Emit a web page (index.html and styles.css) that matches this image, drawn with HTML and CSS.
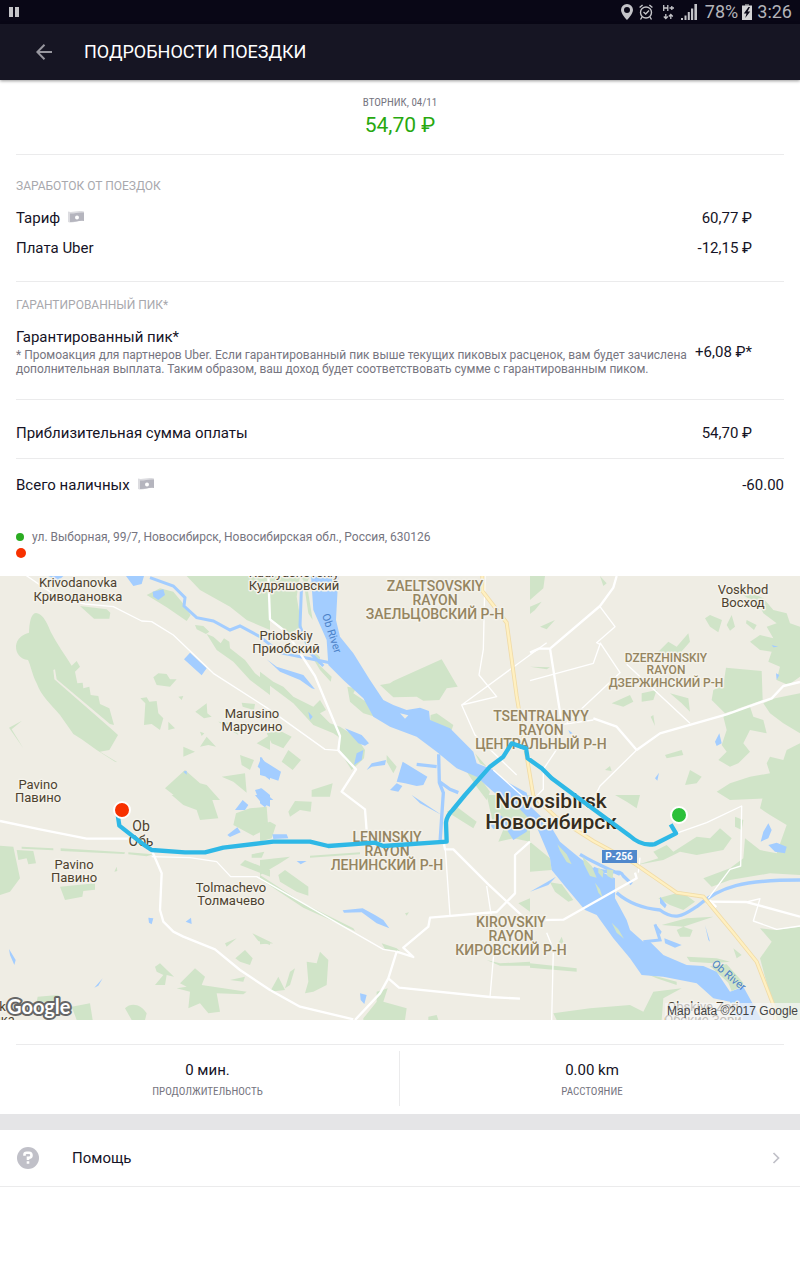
FILE: index.html
```
<!DOCTYPE html>
<html lang="ru">
<head>
    <meta charset="UTF-8">
    <meta name="viewport" content="width=device-width, initial-scale=1.0">
    <title>Подробности поездки</title>
    <link rel="stylesheet" href="styles.css">
</head>
<body>
    <svg class="sprite" aria-hidden="true">
        <symbol id="cash" viewBox="0 0 16 12">
            <path d="M0 0.5C4 2 9-1 16 0.5V10C10 9 5 13 0 11Z" fill="#dcdce0"/>
            <path d="M2 2.5C6 3 10 1 16 1.5V10C11 9 7 11.500 2 11Z" fill="#b5b5be"/>
            <circle cx="9" cy="6.500" r="2" fill="#fff"/>
        </symbol>
    </svg>

    <div class="status-bar">
        <svg width="12" height="12" viewBox="0 0 12 12"><path d="M1 1h4v10H1zM7 1h4v10H7z" fill="#c4c4c8"/></svg>
        <div class="status-icons">
            <svg width="12" height="16" viewBox="0 0 12 16"><path fill-rule="evenodd" d="M6 0a6 6 0 0 0-6 6c0 4 6 10 6 10s6-6 6-10a6 6 0 0 0-6-6zm0 3a3 3 0 1 1 0 6 3 3 0 0 1 0-6z" fill="#c4c4c8"/></svg>
            <svg class="alarm" width="14" height="16" viewBox="0 0 14 16" fill="none" stroke="#c4c4c8" stroke-width="1.400"><circle cx="7" cy="8.500" r="5.500"/><path d="M4.500 8l2.200 2L10 6.500M.6 3.500L3.600 1M13.400 3.500L10.400 1M3 13l-1.500 2.500M11 13l1.500 2.500"/></svg>
            <svg class="data" width="11" height="16" viewBox="0 0 11 16" fill="none" stroke="#c4c4c8" stroke-width="1.300"><path d="M.7 1v6M4.800 1v6M.7 4h4M6.500 4H11M8.800 2v4M2.800 10v4.500M.8 12.500l2 2 2-2M7.800 15v-4.500M5.800 12.500l2-2 2 2"/></svg>
            <svg width="16" height="16" viewBox="0 0 16 16"><path d="M0 14h2v2H0zM3.500 11.500h2V16h-2zM6.800 8h2v8h-2zM10 4.500h2.200V16H10zM13.400 0H16v16h-2.600z" fill="#c4c4c8"/></svg>
            <span class="battery-level">78%</span>
            <svg class="battery" width="10" height="16" viewBox="0 0 10 16"><path d="M3 0h4v2H3z" fill="#77777c"/><path d="M0 1.500h10V16H0z" fill="#d4d4d6"/><path d="M6.500 3L1.800 9.500h2.700L3.200 14 8.200 7.500H5.600L8 3z" fill="#0a0818"/></svg>
            <span class="clock">3:26</span>
        </div>
    </div>

    <header class="toolbar">
        <button class="back" type="button" aria-label="Назад">
            <svg width="16" height="16" viewBox="0 0 16 16" fill="none" stroke="#98979f" stroke-width="2"><path d="M16 8H1.500M8.500 .8L1.300 8l7.200 7.200"/></svg>
        </button>
        <h1>ПОДРОБНОСТИ ПОЕЗДКИ</h1>
    </header>

    <main>
        <section class="summary">
            <div class="caption">ВТОРНИК, 04/11</div>
            <div class="total">54,70 ₽</div>
        </section>

        <section class="block">
            <h2>ЗАРАБОТОК ОТ ПОЕЗДОК</h2>
            <div class="row">
                <span class="label">Тариф <svg class="cash" width="16" height="12"><use href="#cash"/></svg></span>
                <span>60,77 ₽</span>
            </div>
            <div class="row">
                <span class="label">Плата Uber</span>
                <span>-12,15 ₽</span>
            </div>
        </section>

        <section class="block promo">
            <h2>ГАРАНТИРОВАННЫЙ ПИК*</h2>
            <div class="row promo-row">
                <div class="promo-text">
                    <h3>Гарантированный пик*</h3>
                    <p>* Промоакция для партнеров Uber. Если гарантированный пик выше текущих пиковых расценок, вам будет зачислена дополнительная выплата. Таким образом, ваш доход будет соответствовать сумме с гарантированным пиком.</p>
                </div>
                <span>+6,08 ₽*</span>
            </div>
        </section>

        <section class="block payout">
            <div class="row">
                <span class="label">Приблизительная сумма оплаты</span>
                <span>54,70 ₽</span>
            </div>
        </section>

        <section class="block cash-total">
            <div class="row">
                <span class="label">Всего наличных <svg class="cash" width="16" height="12"><use href="#cash"/></svg></span>
                <span>-60.00</span>
            </div>
        </section>

        <ul class="stops">
            <li><i class="dot start"></i>ул. Выборная, 99/7, Новосибирск, Новосибирская обл., Россия, 630126</li>
            <li><i class="dot end"></i></li>
        </ul>

        <div class="map">
            <svg viewBox="0 0 800 444" role="img" aria-label="Маршрут поездки">
                <rect width="800" height="444" fill="#efede4"/>
                <!-- terrain is drawn at triple scale -->
                <g transform="scale(.333334)">
                    <g class="parks">
                        <g transform="translate(0 -18)">
                            <path d="M108 129C125 130 138 150 152 185C170 220 195 255 215 287L230 273L240 290L225 305L232 340L248 338L250 355L268 350L272 375L295 378L300 402L328 415L342 465L330 462L170 328L165 298L160 300L163 328L335 478L354 495L328 540L300 545L352 577L345 575L290 540L245 508L220 492L180 435C150 400 125 380 110 340C95 310 92 285 84 270C60 268 47 248 48 228C50 205 68 193 87 188C88 160 92 130 108 129Z"/>
                            <path d="M240 108L320 118L331 128L328 146L282 146ZM440 75L480 55L520 65L545 95L572 135L560 153L500 112ZM560 18L600 60L690 110L740 150L810 180V18ZM585 165L610 168L628 185L618 192L590 178ZM620 192L640 200L662 220L672 205L688 215L690 235L735 270L765 310L810 345V375L750 330L700 275L650 240ZM460 322L475 310L500 312L510 328L530 328L510 350L470 345ZM421 385L440 382L448 395L470 393L475 430L490 445L480 480L455 462L432 465L436 400ZM505 455L525 475L505 480ZM586 425L620 400L622 430L635 440L612 445ZM535 380L550 378L545 390ZM725 398L765 402L762 420L728 410ZM550 530L585 545L550 560ZM600 530L620 500L648 530L625 525ZM655 455L700 460L715 495L690 480ZM720 555L762 570L750 600L725 585ZM495 655L555 600L600 640L620 645L660 690H540ZM665 620L735 610L740 668L700 635ZM600 485L613 490L605 498ZM770 520L810 495V540ZM27 473L66 452L35 478L70 535Z"/>
                        </g>
                        <g transform="translate(780 -18)">
                            <path d="M0 18H120L110 80L125 170L90 190L50 160L0 130ZM115 18H150L140 40L158 150L145 130L130 30ZM150 230L180 262L178 285L215 320L212 335L180 300L150 250ZM0 305L40 335L70 350L100 380L160 410L180 390L198 420L180 430L210 460L240 470L288 500L315 540L312 565L275 600L240 545L235 500L220 490L160 465L100 400L0 325ZM360 345L390 340L400 333L545 268L593 350L560 355L538 390L490 392L470 380L400 382ZM262 350L288 355L280 370L325 400L345 440L310 430L270 395ZM512 435L530 430L580 465L575 480L510 455ZM20 490L60 482L95 500L70 535L35 520ZM85 540L123 570L98 600L65 575ZM155 660L218 640L210 680L155 680ZM380 555L410 590L400 610L380 575ZM620 605L650 610L690 665L680 690L650 650ZM645 550L680 590L660 580Z"/>
                        </g>
                        <g transform="translate(1590 -18)">
                            <path d="M0 18H45L40 55L0 90ZM0 110L35 95L15 120L0 132ZM525 145L540 135L576 150L565 187L540 170ZM590 165L605 135L615 170L600 182ZM615 55L670 70L700 85L730 120L770 130L780 160L810 170V320L775 345L740 330L750 290L715 275L725 245L690 240L660 215L690 195L730 205L710 170L740 160L700 130L690 110L640 75ZM588 293L695 303L698 390L585 430L545 390L550 360L580 345ZM610 420L660 410L670 440L700 450L710 490L660 480L640 520L660 545L625 580L600 590L565 570L590 545L575 525L590 480L580 440ZM700 400L735 385L810 370V490L760 460L720 430ZM710 580L720 560L760 570L770 540L810 520V680L600 690L560 665L600 640L660 620L720 610ZM405 555L455 540L460 555L410 565ZM480 600L515 620L500 640L465 645ZM245 400L300 375L310 395L280 410ZM335 370L380 360L370 390L335 395ZM420 370L475 385L480 425L455 400ZM385 245L415 215L440 230L475 190L480 215L450 250L400 260ZM225 600L240 588L245 603ZM210 18L230 40L220 48ZM0 290L60 292L50 298ZM30 170L75 150L50 178ZM370 435L375 468L362 440ZM650 150L680 165L672 180L648 160Z"/>
                        </g>
                        <g transform="translate(0 657)">
                            <path d="M0 152L40 155L60 250L30 290L0 300ZM50 165L100 168L108 205L85 208L80 190L55 195ZM65 155L160 160L160 166L65 161ZM182 160L375 172L373 177L182 168ZM385 172L460 178L440 184L385 178ZM180 275L285 265V284L250 288L247 305L195 315ZM515 0H632L655 70L600 75L590 45L550 30ZM708 55L750 40L800 35L805 100L760 122L700 90ZM755 178L793 170L785 188L755 188ZM735 195L810 225V245L720 210ZM465 515L480 505L522 545L500 540L495 570L465 570L490 540L470 530ZM530 580L560 575L540 565L585 520L615 545L605 570L640 575L740 590L730 598L650 595L660 650L625 655L600 625L565 640L570 590ZM706 490L735 465L758 490L750 510L720 500ZM757 415L810 440L810 450L775 438ZM690 555L735 545L730 560ZM215 635L270 625L278 675H230ZM375 640C395 620 425 630 440 655L435 675H395ZM113 605L175 600L180 625L110 620ZM675 445L710 430L680 455ZM343 230L350 215L352 228Z"/>
                        </g>
                        <g transform="translate(780 657)">
                            <path d="M0 90L30 80L48 90L35 130L0 140ZM85 50L105 18L155 20L152 50L120 45L90 65ZM55 240L75 225L145 275L145 302L110 290L60 260ZM0 195L90 185L60 205L0 240ZM150 182L300 172L300 178L150 188ZM0 240L130 325L280 400L285 408L130 338L0 252ZM0 430L40 445L0 448ZM30 590L55 545L75 585ZM105 520L90 570L75 580L90 530ZM140 500L170 505L180 470L205 495L200 570L160 590L135 595L145 560ZM365 445L410 460L420 468L375 462ZM560 50L590 35L650 80L640 100L585 65ZM680 0L700 90L740 80L715 140L760 130L810 140V0ZM775 325L810 310V350ZM680 495L720 505L810 500V512L720 512ZM310 670L350 620L350 590L383 580L370 620L440 640L435 675H310ZM505 665L530 660L535 675H505ZM435 355L447 352L440 362Z"/>
                        </g>
                        <g transform="translate(1590 657)">
                            <path d="M0 140L60 190L65 225L0 230ZM60 262L95 268L130 315L115 320L75 290ZM320 210L385 190L370 170L410 150L430 170L500 125L540 130L570 100L605 130L580 165L500 180L450 170L400 195ZM615 65L640 75L635 105L615 95ZM520 250L600 220L640 190L645 130L690 165L740 175L770 90L720 60L690 40L700 0H810V240L720 235L600 255L545 275ZM385 310L455 290L495 320L460 345L420 330ZM395 390L470 370L550 365L460 395ZM690 400L735 405L810 395V675H740L720 600L690 490L725 440ZM440 405L460 395L488 405L480 425L450 425ZM345 535L440 560L440 570L380 550ZM70 655L180 640L300 630L340 650L370 590L455 580L400 610L395 675H80ZM470 485L560 490L600 500L550 505L480 500ZM0 505L140 520L140 530L0 518ZM95 425L100 440L75 465ZM255 0H330L320 40L290 20ZM610 460L635 480L620 490Z"/>
                        </g>
                    </g>
                    <g class="water">
                        <path d="M933 0L940 102L980 192L985 267L1030 312L1090 367L1120 422L1170 452L1250 482L1310 527L1370 577L1430 602L1480 647L1560 700L1610 752L1650 847L1655 882L1700 937L1755 1002L1790 1017L1840 1087L1890 1147L1925 1197L1990 1202L2090 1222L2140 1267L2190 1277L2210 1332H2285L2230 1232L2190 1247L2150 1187L2110 1170L2060 1167L1990 1137L1950 1097L1930 1097L1890 1062L1880 1032L1845 967V907L1780 877L1740 847L1680 797L1650 747L1590 690L1580 650L1520 617L1480 582L1430 562L1420 527L1350 457L1290 432L1287 405L1260 395L1220 402L1180 387L1150 372L1110 312L1060 232L1020 182L1008 132L1015 0Z"/>
                        <path d="M1780 877C1830 900 1860 875 1870 900L1895 924M1740 835C1790 865 1830 880 1860 895M1320 800L1330 650L1318 620L1316 535M1320 618L1350 640L1375 650M1250 565L1310 572" fill="none" stroke="#a3cdff" stroke-width="10"/>
                        <path d="M1850 950C1890 985 1940 998 1980 1002C2030 1040 2060 1010 2090 992C2160 930 2230 912 2400 912" fill="none" stroke="#a3cdff" stroke-width="10"/>
                        <path d="M1930 1097L1980 1092L1965 1045M450 5L520 30L555 65L552 90L590 125L640 135L690 162L720 150L780 182L840 230L990 260M905 20L900 150L930 230L970 270" fill="none" stroke="#a3cdff" stroke-width="9"/>
                        <g transform="translate(0 -18)">
                            <path d="M378 18H432L425 42L400 48ZM458 65L490 58L495 75L475 90L460 80ZM552 268L570 248L620 295L605 316ZM145 18H190L175 32ZM550 605L560 602V614ZM785 560L798 590L790 605L773 590ZM800 600L810 600V630L797 620ZM765 660L785 655L810 675V700L775 685Z"/>
                        </g>
                        <g transform="translate(780 -18)">
                            <path d="M255 475L305 495L327 520L315 527L295 520ZM290 550L310 540L305 570L282 585ZM320 600L335 580L378 570L375 585L335 590ZM0 560L15 575L63 605L55 632L20 620L0 615ZM410 635L428 575L502 620L490 645L470 648L435 640ZM390 660L410 640L427 648L415 665ZM0 655L40 690H0ZM145 425L158 440L150 450ZM20 268L50 290L130 315L165 358L155 355L120 330L60 305Z"/>
                        </g>
                        <g transform="translate(1590 -18)">
                            <path d="M555 515L568 490L575 520L560 528ZM375 625L387 608L382 632ZM115 480L128 490L120 492ZM725 225L745 230L730 232ZM738 310L748 315L740 330Z"/>
                        </g>
                        <g transform="translate(0 657)">
                            <path d="M765 0H810V35L785 25ZM705 45L728 15L745 30L735 45ZM682 120L712 97L722 112L690 126ZM445 368L460 370L455 388L447 383ZM557 380L573 368L575 387ZM27 462L47 495L43 510L30 480ZM283 578L308 550L295 572Z"/>
                        </g>
                        <g transform="translate(780 657)">
                            <path d="M0 5L30 15L15 37L0 25ZM37 118L80 118L85 130L40 132ZM248 346L308 340L345 360L370 375L388 400L350 385L305 352L252 353ZM300 595L320 600L313 627L302 615ZM110 198L140 198L122 208ZM455 0L545 60L480 25ZM690 90L720 60L750 80L805 75L800 110L760 135L735 95L700 102Z"/>
                        </g>
                        <g transform="translate(1590 657)">
                            <path d="M692 140L700 110L715 85L725 105L715 130ZM715 150L740 143L770 155L765 175L735 170ZM390 305L410 330L405 340L390 325ZM375 385L395 410L390 420ZM403 430L455 450L435 458L405 445ZM525 390L540 440L535 435ZM0 290L50 262L78 245L55 270Z"/>
                        </g>
                        <!-- islands -->
                        <path d="M1672 805L1700 835L1715 865L1700 858L1680 825ZM1748 842L1775 870L1790 905L1770 900L1752 865ZM1795 875L1810 885L1808 905L1795 890ZM1820 880L1840 883L1838 908L1822 900ZM1785 920L1800 940L1808 965L1795 950ZM1835 1040L1855 1060L1872 1088L1850 1070ZM2130 1170L2180 1165L2230 1220L2225 1232L2195 1245L2185 1220Z" fill="#d0e4c8"/>
                        <path d="M1200 412L1225 418L1215 428Z" fill="#efede4"/>
                    </g>
                    <g class="roads">
                        <path d="M0 735L120 760L260 788L400 788M455 822L485 892L480 1002L490 1037L520 1067L550 1082L645 1120L720 1182L810 1242L900 1292L1060 1330M1190 1127L1240 1143L1210 1115L1285 1052L1290 1025L1490 1008L1545 952L1545 837L1590 797M1190 1127L1165 1207L1140 1252L1065 1332M1165 1207L1197 1235L1470 1263L1560 1268M1332 805L1335 820H1360L1465 925L1580 1032"/>
                        <path d="M1560 1034L1690 1031L1910 907L1905 890M1015 523L1068 580L1025 647L1095 700L1102 790M1015 523L1020 480L945 300L860 170L810 130L805 0"/>
                        <path d="M1590 230L1617 218H1650L1800 90L1840 35L1850 0M1650 217L1685 440L1670 520M1910 522L1980 472L2180 415L2315 367L2350 330L2400 318M1780 427L1850 452L1910 522"/>
                    </g>
                    <g class="roads streets">
                        <path d="M455 842L570 845L650 857L692 902L770 902L1150 1120L1190 1127M75 -4L180 68L255 84L340 92L425 135L455 137L520 177L640 292L800 395L975 520L1015 523"/>
                        <path d="M1455 0L1450 220L1437 297L1490 362L1385 387L1425 477L1550 597M1385 387L1640 200M1670 520L1630 580V640L1590 680M1590 314L1780 262L1800 205L1790 200L1845 152L1800 92M1800 200L1860 290L1700 440M1880 265L2070 442M1640 452L1780 432M1910 522L1800 630L1770 690"/>
                        <path d="M2028 772L2120 740L2225 690L2222 870L2190 880L2125 967M2240 978L2280 968L2260 1035L2330 1060L2400 1050M1460 930L1485 1090L1470 1263M1336 820L1350 1018M1640 1070L1660 1120L1655 1332M1920 845L1915 890M1480 582L1590 680"/>
                    </g>
                    <path class="roads" d="M2125 977L2240 978L2400 1022"/>
                    <path d="M2125 977L2145 997" stroke="#fff" stroke-width="18"/>
                    <path class="highway-edge" d="M1447 0V45L1520 140L1550 360L1570 480L1600 660L1670 725L1780 795L1900 860L2030 950L2110 962L2200 1070L2270 1157L2325 1300V1332"/>
                    <path class="highway" d="M1447 0V45L1520 140L1550 360L1570 480L1600 660L1670 725L1780 795L1900 860L2030 950L2110 962L2200 1070L2270 1157L2325 1300V1332"/>
                </g>
                <g class="places">
                    <text x="78" y="11">Krivodanovka</text><text x="78" y="25">Криводановка</text>
                    <text x="294" y="1">Kudryashovskiy</text><text x="294" y="14">Кудряшовский</text>
                    <text x="286" y="64">Priobskiy</text><text x="286" y="77">Приобский</text>
                    <text x="252" y="142">Marusino</text><text x="252" y="155">Марусино</text>
                    <text x="38" y="213">Pavino</text><text x="38" y="226">Павино</text>
                    <text x="74" y="293">Pavino</text><text x="74" y="306">Павино</text>
                    <text x="231" y="316">Tolmachevo</text><text x="231" y="329">Толмачево</text>
                    <text x="743" y="18">Voskhod</text><text x="743" y="31">Восход</text>
                    <text x="703" y="435">Obskiye Zori</text><text x="703" y="448">Обские Зори</text>
                    <text x="6" y="435">ka</text><text x="4" y="448">ика</text>
                </g>
                <g class="places town"><text x="141" y="255">Ob</text><text x="141" y="270">Обь</text></g>
                <g class="districts">
                    <text x="435" y="15">ZAELTSOVSKIY</text><text x="435" y="29">RAYON</text><text x="435" y="43">ЗАЕЛЬЦОВСКИЙ Р-Н</text>
                    <text x="541" y="145">TSENTRALNYY</text><text x="541" y="159">RAYON</text><text x="541" y="173">ЦЕНТРАЛЬНЫЙ Р-Н</text>
                    <text x="387" y="266">LENINSKIY</text><text x="387" y="280">RAYON</text><text x="387" y="294">ЛЕНИНСКИЙ Р-Н</text>
                    <text x="511" y="351">KIROVSKIY</text><text x="511" y="365">RAYON</text><text x="511" y="379">КИРОВСКИЙ Р-Н</text>
                </g>
                <g class="districts small"><text x="666" y="86">DZERZHINSKIY</text><text x="666" y="98">RAYON</text><text x="666" y="111">ДЗЕРЖИНСКИЙ Р-Н</text></g>
                <g class="city"><text x="551" y="232">Novosibirsk</text><text x="551" y="253">Новосибирск</text></g>
                <g class="rivers">
                    <text transform="translate(322 39) rotate(72)">Ob River</text>
                    <text transform="translate(711 389) rotate(40)">Ob River</text>
                </g>
                <rect x="602" y="274" width="35" height="13" fill="#5088cc"/>
                <text class="shield" x="619" y="284">P-256</text>
                <g transform="scale(.333334)">
                    <path class="route" d="M353 715L358 749L400 782L430 805L455 822L555 829L615 829L670 815L820 797H930L985 810L1125 800L1150 810L1340 797L1338 740Q1340 720 1358 702L1395 657L1470 572L1510 542L1535 502L1578 517L1583 547L1625 577L1655 607L1740 670L1890 780Q1925 812 1965 804L2028 772L2012 745"/>
                </g>
                <circle class="pin" cx="122" cy="234" r="8" fill="#f73100"/>
                <circle class="pin" cx="679" cy="239" r="8" fill="#2bc03a"/>
                <text class="google" x="7" y="438">Google</text>
            </svg>
            <small class="attribution">Map data ©2017 Google</small>
        </div>

        <section class="stats">
            <div class="stat"><div class="value">0 мин.</div><div class="caption">ПРОДОЛЖИТЕЛЬНОСТЬ</div></div>
            <div class="stat"><div class="value">0.00 km</div><div class="caption">РАССТОЯНИЕ</div></div>
        </section>

        <a class="help" href="#">
            <svg width="24" height="24" viewBox="0 0 24 24"><circle cx="12" cy="12" r="11" fill="#c0c0c8"/><path d="M8.500 9.800V8.500Q8.500 6.800 10.500 6.800H13Q15.500 6.800 15.500 9.300T13 11.800H12V14" fill="none" stroke="#fff" stroke-width="2.600"/><path d="M10.700 15.300h2.600v2.500h-2.600z" fill="#fff"/></svg>
            <span>Помощь</span>
            <svg class="chevron" width="8" height="12" viewBox="0 0 8 12" fill="none" stroke="#c0c0c8" stroke-width="1.700"><path d="M1.500 1L6.500 6l-5 5"/></svg>
        </a>
    </main>
</body>
</html>
```

FILE: styles.css
```
* { box-sizing: border-box; }
body { margin: 0; background: #fff; color: #151326; font-family: Roboto, "Liberation Sans", sans-serif; font-size: 15px; line-height: 20px; }
h1, h2, h3, p, ul { margin: 0; padding: 0; font-weight: 400; }
svg { display: block; flex: none; }
.sprite { position: absolute; width: 0; height: 0; }

.status-bar { display: flex; align-items: center; justify-content: space-between; height: 24px; padding: 0 8px; background: #090716; color: #b4b4b9; font-size: 18px; }
.status-icons { display: flex; align-items: center; }
.alarm { margin-left: 6px; }
.data { margin: 0 7px 0 10px; }
.battery-level { margin-left: 8px; }
.battery { margin: 0 5px 0 4px; }

.toolbar { display: flex; align-items: center; height: 56px; padding: 0 24px; background: #161523; color: #fff; box-shadow: 0 1px 3px rgba(0, 0, 0, .4); }
.toolbar h1 { font-size: 18px; line-height: 24px; }
.back { display: flex; align-items: center; width: 40px; height: 40px; margin-right: 20px; padding: 0 0 0 12px; border: 0; background: none; cursor: pointer; }

.summary { margin: 0 16px; padding: 15px 0 16px; border-bottom: 1px solid #ebebec; text-align: center; }
.caption { color: #76757f; font-family: "Roboto Condensed", "Liberation Sans Narrow", Roboto, sans-serif; font-size: 11px; line-height: 16px; }
.total { margin-top: 1px; color: #27a80f; font-size: 21px; line-height: 26px; }

.block { margin: 0 16px; border-bottom: 1px solid #ebebec; padding: 23px 0 18px; }
.block h2 { margin-bottom: 9px; color: #a8a8ad; font-size: 12px; line-height: 16px; }
.row { display: flex; align-items: center; justify-content: space-between; min-height: 30px; padding-right: 32px; }
.row > span { flex: none; }
.label { display: flex; align-items: center; gap: 8px; }
.cash { margin-bottom: 3px; }
.promo { padding: 15px 0 23px; }
.promo h2 { margin-bottom: 14px; }
.promo-text h3 { font-size: 15px; line-height: 20px; }
.promo-text p { margin-top: 1px; color: #76757f; font-size: 12px; line-height: 14px; }
.promo-row { gap: 4px; }
.payout { padding: 18px 0 10px; }
.cash-total { padding: 11px 0 10px; border: 0; }
.cash-total .row { padding-right: 0; }

.stops { padding: 19px 16px 15px; list-style: none; color: #76757f; font-size: 12px; line-height: 16px; }
.stops li { display: flex; align-items: center; min-height: 16px; }
.dot { flex: none; border-radius: 50%; }
.start { width: 8px; height: 8px; margin-right: 8px; background: #2bac22; }
.end { width: 10px; height: 10px; background: #f73100; }

.map { position: relative; overflow: hidden; }
.map svg { width: 100%; height: auto; }
.map text { font-family: Roboto, sans-serif; text-anchor: middle; }
.parks { fill: #d0e4c8; }
.water { fill: #a3cdff; }
.roads { fill: none; stroke: #fff; stroke-width: 7; stroke-linejoin: round; }
.streets { stroke-width: 4; }
.highway-edge { fill: none; stroke: #f0dba8; stroke-width: 12; }
.highway { fill: none; stroke: #fff0c0; stroke-width: 7; }
.route { fill: none; stroke: #2eb8e6; stroke-width: 13; stroke-linejoin: round; }
.pin { stroke: #fff; stroke-width: 2; }
.places, .districts, .city { stroke: #f4f2ea; stroke-width: 3px; stroke-linejoin: round; paint-order: stroke; }
.places { fill: #4d4230; font-size: 13px; }
.town { font-size: 14px; }
.districts { fill: #958561; font-size: 14px; font-weight: 500; }
.small { font-size: 12px; }
.city { fill: #352d20; font-size: 21px; font-weight: 500; }
.map .rivers text { fill: #4c82c8; font-size: 11px; text-anchor: start; }
.shield { fill: #fff; font-size: 10px; font-weight: 700; }
.map .google { fill: #fff; stroke: #666; stroke-width: 4px; stroke-linejoin: round; paint-order: stroke; font-family: Lato, sans-serif; font-size: 20px; font-weight: 700; text-anchor: start; }
.attribution { position: absolute; right: 0; bottom: 0; padding: 0 2px; background: rgba(245, 245, 245, .7); color: #444; font-family: "Liberation Sans", Arial, sans-serif; font-size: 12px; line-height: 17px; }

.stats { display: grid; grid-template-columns: 1fr 1fr; margin: 24px 16px 0; padding: 6px 0 8px; border-top: 1px solid #ebebec; }
.stat { padding: 9px 8px 6px; text-align: center; }
.stat .caption { margin-top: 4px; }
.stat:first-child { border-right: 1px solid #ebebec; }

.help { display: flex; align-items: center; height: 73px; padding: 0 20px 0 16px; border-top: 16px solid #e5e5e7; border-bottom: 1px solid #ebebec; color: inherit; text-decoration: none; }
.help span { flex: 1; margin-left: 32px; }
```
